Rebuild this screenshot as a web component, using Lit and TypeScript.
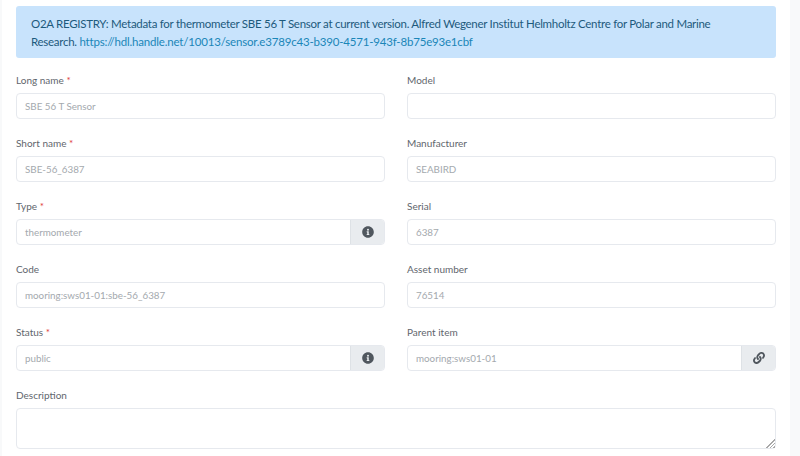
import { LitElement, html, css, svg } from "lit";
import { customElement } from "lit/decorators.js";

const INFO = svg`<path d="M256 8C119 8 8 119 8 256s111 248 248 248 248-111 248-248S393 8 256 8zm0 110a42 42 0 1 1 0 84 42 42 0 0 1 0-84zm56 254c0 7-5 12-12 12h-88c-7 0-12-5-12-12v-24c0-7 5-12 12-12h12v-64h-12c-7 0-12-5-12-12v-24c0-7 5-12 12-12h64c7 0 12 5 12 12v100h12c7 0 12 5 12 12z"/>`;
const LINK = svg`<path d="M326.6 185.4c59.7 59.8 58.9 155.7.4 214.6l-67.2 67.2c-59.3 59.3-155.7 59.3-215 0-59.3-59.3-59.3-155.7 0-215l37.1-37.1c9.8-9.8 26.8-3.3 27.3 10.6.6 17.7 3.8 35.5 9.7 52.7 2 5.8.6 12.3-3.8 16.6l-13.1 13.1c-28 28-28.9 73.7-1.2 102 28 28.6 74.1 28.7 102.3.5l67.2-67.2c28.2-28.2 28.1-73.8 0-101.8-3.7-3.7-7.4-6.6-10.3-8.6a16 16 0 0 1-6.9-12.6c-.4-10.6 3.3-21.5 11.7-29.8l21-21c5.5-5.5 14.2-6.2 20.6-1.7a152.5 152.5 0 0 1 20.1 16.9zM467.5 44.4c-59.3-59.3-155.7-59.3-215 0l-67.2 67.2l-.4.4c-58.6 58.9-59.4 154.8.4 214.6a152.5 152.5 0 0 0 20.1 16.9c6.4 4.5 15.1 3.8 20.6-1.7l21-21c8.4-8.4 12.1-19.2 11.7-29.8a16 16 0 0 0-6.9-12.6c-2.9-2-6.6-4.9-10.3-8.6-28.1-28-28.2-73.6 0-101.8l67.2-67.2c28.2-28.2 74.3-28.1 102.3.5 27.7 28.3 26.8 74-1.2 102l-13.1 13.1c-4.4 4.4-5.8 10.8-3.8 16.6 5.9 17.2 9.1 35 9.7 52.7.5 13.9 17.5 20.4 27.3 10.6l37.1-37.1c59.3-59.3 59.3-155.7 0-215z"/>`;

type Field = { label: string; value?: string; required?: boolean; addon?: "info" | "link" };

const FIELDS: Field[] = [
  { label: "Long name", value: "SBE 56 T Sensor", required: true },
  { label: "Model" },
  { label: "Short name", value: "SBE-56_6387", required: true },
  { label: "Manufacturer", value: "SEABIRD" },
  { label: "Type", value: "thermometer", required: true, addon: "info" },
  { label: "Serial", value: "6387" },
  { label: "Code", value: "mooring:sws01-01:sbe-56_6387" },
  { label: "Asset number", value: "76514" },
  { label: "Status", value: "public", required: true, addon: "info" },
  { label: "Parent item", value: "mooring:sws01-01", addon: "link" },
];

@customElement("app-root")
export class AppRoot extends LitElement {
  static styles = css`
    :host {
      display: block;
      height: 456px;
      overflow: hidden;
      background: #f8f9fa;
      font-family: Lato, "Open Sans", sans-serif;
    }
    .panel {
      box-sizing: border-box;
      width: 788px;
      height: 456px;
      margin-left: 2px;
      padding: 6px 14px 0;
      background: #fff;
    }
    .alert {
      box-sizing: border-box;
      height: 52px;
      padding: 9px 30px 9px 15px;
      background: #c8e3fc;
      border-radius: 3px;
      color: #1d5a7c;
      font-size: 11.5px;
      letter-spacing: -0.28px;
      line-height: 17.5px;
    }
    .alert a {
      color: #1a86b8;
      text-decoration: none;
      letter-spacing: -0.19px;
    }
    .grid {
      display: grid;
      grid-template-columns: 369px 369px;
      column-gap: 22px;
      row-gap: 16px;
      margin-top: 14px;
    }
    .wide {
      grid-column: 1 / -1;
    }
    label {
      display: block;
      height: 21px;
      line-height: 16px;
      font-size: 10px;
      color: #5f666d;
    }
    .req {
      color: #e03b3b;
    }
    .input {
      box-sizing: border-box;
      display: flex;
      height: 26px;
      border: 1px solid #e6e9ee;
      border-radius: 4px;
      overflow: hidden;
      background: #fff;
    }
    .val {
      flex: 1;
      padding: 0 8px;
      line-height: 24px;
      font-size: 9.8px;
      color: #a4a9ae;
    }
    .addon {
      box-sizing: border-box;
      width: 34px;
      display: flex;
      align-items: center;
      justify-content: center;
      background: #e9ecef;
      border-left: 1px solid #dee2e6;
    }
    .addon svg {
      width: 12px;
      height: 12px;
      fill: #50575e;
    }
    .area {
      position: relative;
      box-sizing: border-box;
      height: 41px;
      border: 1px solid #e6e9ee;
      border-radius: 4px;
    }
    .grip {
      position: absolute;
      right: 0;
      bottom: 0;
      width: 11px;
      height: 11px;
      background: repeating-linear-gradient(135deg, transparent 0 1.5px, #a8a8a8 1.5px 2.5px);
      clip-path: polygon(100% 0, 100% 100%, 0 100%);
    }
  `;

  private renderField(f: Field) {
    return html`<div>
      <label>${f.label}${f.required ? html` <span class="req">*</span>` : ""}</label>
      <div class="input">
        <div class="val">${f.value ?? ""}</div>
        ${f.addon
          ? html`<div class="addon">
              <svg viewBox="0 0 512 512">${f.addon === "info" ? INFO : LINK}</svg>
            </div>`
          : ""}
      </div>
    </div>`;
  }

  render() {
    return html`<div class="panel">
      <div class="alert">
        O2A REGISTRY: Metadata for thermometer SBE 56 T Sensor at current version. Alfred Wegener Institut Helmholtz Centre for Polar and Marine Research.
        <a href="#">https://hdl.handle.net/10013/sensor.e3789c43-b390-4571-943f-8b75e93e1cbf</a>
      </div>
      <div class="grid">
        ${FIELDS.map((f) => this.renderField(f))}
        <div class="wide">
          <label>Description</label>
          <div class="area"><div class="grip"></div></div>
        </div>
      </div>
    </div>`;
  }
}
